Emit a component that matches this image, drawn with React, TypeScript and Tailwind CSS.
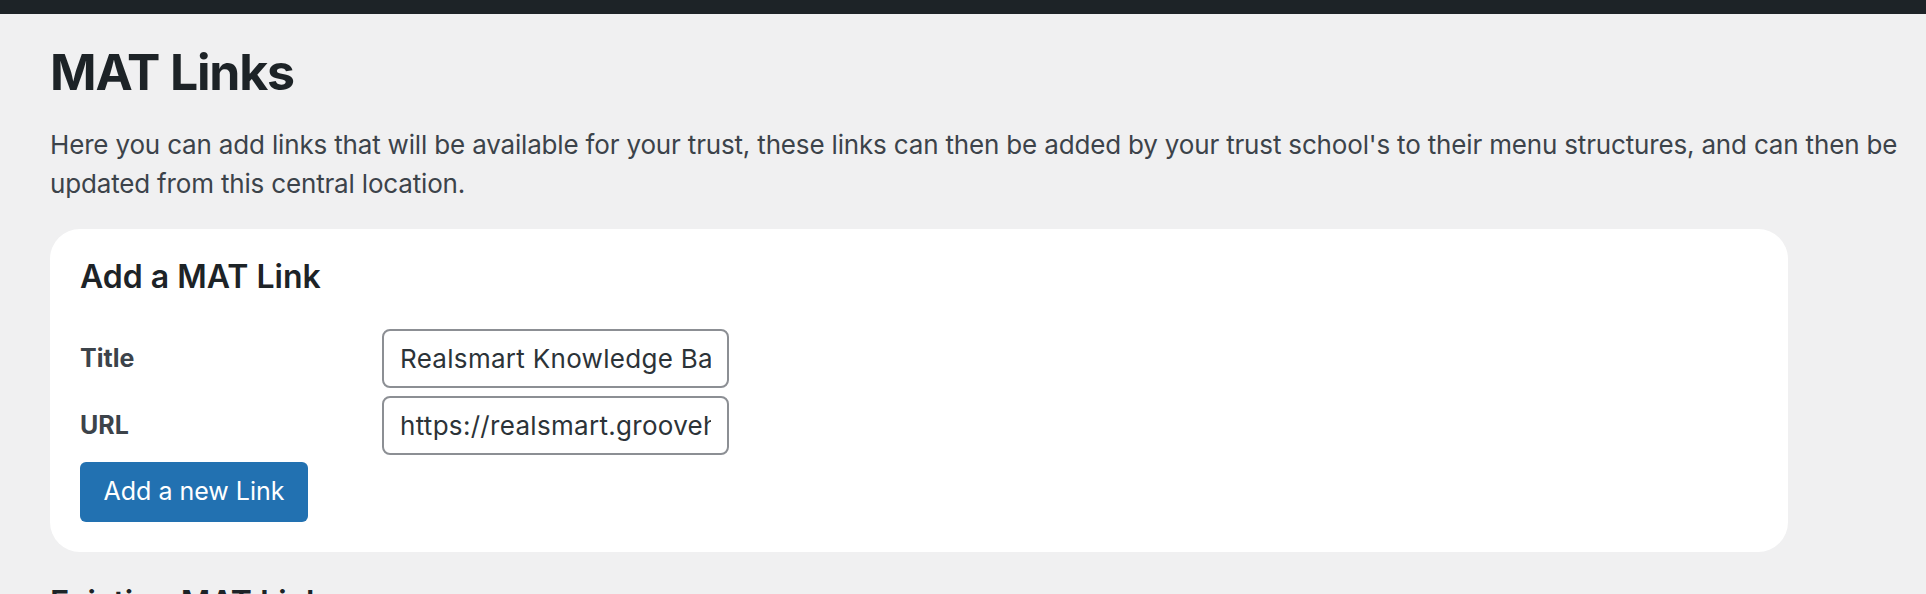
import React from "react";

export default function App() {
  return (
    <div className="min-h-screen w-full bg-[#f0f0f1] font-['Inter','Noto_Sans',sans-serif]">
      <div className="h-[14px] w-full bg-[#1d2327]" />
      <main className="pl-[50px] pr-[16px]">
        <h1 className="mt-[28px] text-[50px] font-bold leading-[60px] tracking-[-1.2px] text-[#1d2327]">
          MAT Links
        </h1>
        <p className="mt-[23px] text-[26px] leading-[39px] tracking-[-0.17px] text-[#3c434a]">
          Here you can add links that will be available for your trust, these links can then be added by your trust school's to their menu structures, and can then be updated from this central location.
        </p>
        <section className="mt-[26px] w-[1738px] rounded-[30px] bg-white pl-[30px] pr-[30px] pt-[28px] pb-[30px]">
          <h2 className="text-[32px] font-semibold leading-[40px] text-[#1d2327]">
            Add a MAT Link
          </h2>
          <div className="mt-[32px] grid grid-cols-[302px_347px] gap-y-[8px]">
            <label className="flex items-center text-[25px] font-bold text-[#3c434a]">Title</label>
            <input
              readOnly
              defaultValue="Realsmart Knowledge Base"
              className="h-[59px] w-[347px] rounded-[8px] border-2 border-[#8c8f94] bg-white px-[16px] text-[26px] tracking-[0.3px] text-[#2c3338] outline-none"
            />
            <label className="flex items-center text-[25px] font-bold text-[#3c434a]">URL</label>
            <input
              readOnly
              defaultValue="https://realsmart.groovehq.com"
              className="h-[59px] w-[347px] rounded-[8px] border-2 border-[#8c8f94] bg-white px-[16px] text-[26px] tracking-[0.3px] text-[#2c3338] outline-none"
            />
          </div>
          <button className="mt-[7px] flex h-[60px] w-[228px] items-center justify-center rounded-[6px] bg-[#2271b1] text-[25px] text-white">
            Add a new Link
          </button>
        </section>
        <h2 className="mt-[31px] text-[32px] font-semibold leading-[40px] text-[#1d2327]">
          Existing MAT Links
        </h2>
      </main>
    </div>
  );
}
